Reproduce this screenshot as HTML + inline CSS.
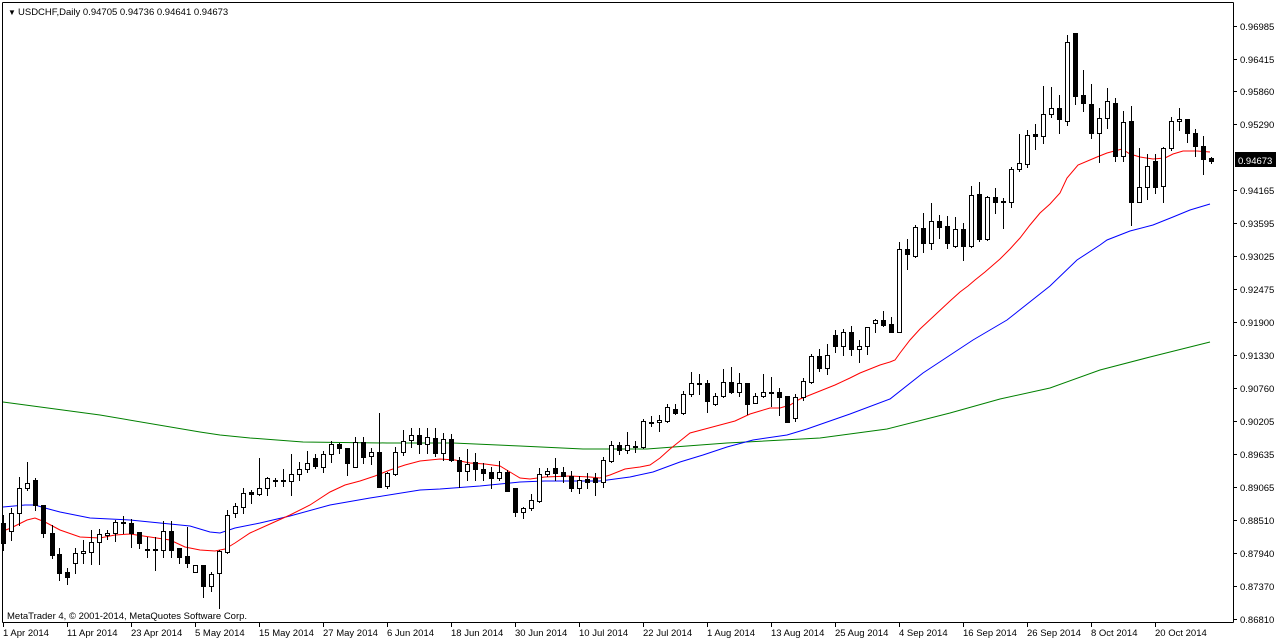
<!DOCTYPE html>
<html><head><meta charset="utf-8"><style>
html,body{margin:0;padding:0;background:#fff;width:1276px;height:641px;overflow:hidden}
svg{display:block}
text{font-family:"Liberation Sans",sans-serif;font-size:9.5px;fill:#000}
</style></head><body>
<svg id="s" width="1276" height="641" xmlns="http://www.w3.org/2000/svg">
<rect x="0" y="0" width="1276" height="641" fill="#fff"/>
<polyline fill="none" stroke="#008000" stroke-width="1" points="3,402 100,415 200,432 220,435 250,438 303,442 387,443 453,443 520,446 583,449 647,449 687,446 727,443 820,438 887,429 950,413 1000,399 1050,388 1100,370 1150,357 1210,342"/>
<polyline fill="none" stroke="#0000ff" stroke-width="1" points="3,507 25,505 35,505 45,508 60,512 90,518 130,520 160,523 190,526 210,532 220,533 235,528 260,523 290,516 330,505 370,498 420,490 440,489 480,486 500,484 520,482 545,481 600,481 630,477 653,472 680,462 703,455 727,447 753,440 787,435 807,429 850,414 890,399 923,373 973,340 1007,320 1050,286 1077,260 1100,245 1107,240 1130,231 1153,225 1173,217 1190,210 1210,204"/>
<polyline fill="none" stroke="#ff0000" stroke-width="1" points="3,531 11,528 27,520 35,518 45,522 60,530 80,537 100,538 115,535 130,534 150,537 170,540 185,547 200,550 215,551 225,549 235,543 250,533 270,524 290,515 310,505 330,492 345,485 360,481 375,476 390,470 405,465 420,461 440,459 455,460 470,463 485,464 500,466 510,472 520,478 530,479 545,477 570,476 590,477 600,478 610,475 625,469 640,467 650,465 660,458 670,449 680,441 690,433 705,429 720,425 735,421 750,414 760,411 770,408 780,408 790,405 800,399 810,395 820,391 835,385 850,378 860,373 870,369 880,365 890,362 895,360 900,353 910,340 920,329 935,315 950,301 960,292 968,286 975,280 985,272 1000,259 1010,249 1020,238 1030,225 1040,213 1050,204 1060,193 1067,178 1078,165 1097,157 1107,153 1122,149 1130,154 1140,157 1153,159 1165,158 1173,154 1183,151 1197,151 1210,152"/>
<g id="bars"></g>
<g fill="none" stroke="#000" stroke-width="1">
<line x1="2.5" y1="2.5" x2="1233.5" y2="2.5"/>
<line x1="2.5" y1="2.5" x2="2.5" y2="622.5"/>
<line x1="1233.5" y1="2.5" x2="1233.5" y2="622.5"/>
<line x1="2.5" y1="622.5" x2="1233.5" y2="622.5"/>
</g>
<g id="ax"></g>
<text x="8" y="15" style="font-size:8px">▼</text>
<text x="18" y="15">USDCHF,Daily  0.94705 0.94736 0.94641 0.94673</text>
<text x="7" y="619">MetaTrader 4, © 2001-2014, MetaQuotes Software Corp.</text>
<rect x="1235" y="152" width="41" height="15" fill="#000"/>
<text x="1238" y="164" style="fill:#fff">0.94673</text>
</svg>
<script>
var NS="http://www.w3.org/2000/svg";
function el(p,t,a,txt){var e=document.createElementNS(NS,t);for(var k in a)e.setAttribute(k,a[k]);if(txt)e.textContent=txt;p.appendChild(e);return e;}
var D="3,523,543,515,550,1|11,513,531,508,540,0|19,488,513,477,525,0|27,483,488,462,490,0|35,480,505,478,510,1|43,505,533,505,537,1|52,533,555,525,558,1|59,554,573,548,580,1|67,572,577,568,584,1|75,553,563,548,573,0|83,551,553,540,563,0|91,542,552,530,564,0|99,534,542,529,564,0|107,533,535,530,539,0|115,522,533,520,541,0|123,522,523,516,533,1|131,523,533,519,547,1|139,532,543,532,548,1|147,549,550,537,557,1|155,549,550,537,570,0|163,531,550,521,557,0|171,531,550,521,557,1|179,548,557,548,563,1|187,556,563,527,567,1|195,565,572,565,572,0|203,565,586,565,597,1|211,574,586,572,591,0|219,551,573,550,608,0|227,515,552,510,553,0|235,506,513,503,517,0|243,493,507,488,513,0|251,492,494,490,503,1|259,488,494,458,495,0|267,478,488,477,495,0|275,480,481,478,486,1|283,480,481,469,486,1|291,474,481,454,495,0|299,469,474,462,480,0|307,463,469,451,472,0|315,458,466,454,468,1|323,454,467,451,472,0|331,444,454,441,462,0|339,444,448,443,453,1|347,448,463,448,475,1|355,442,467,437,467,0|363,442,457,437,463,1|371,452,456,448,464,0|379,452,487,413,487,1|387,473,486,472,488,0|395,452,474,447,475,0|403,441,452,430,455,0|411,435,440,428,447,0|419,435,444,428,453,1|427,437,444,428,453,0|435,438,453,428,456,1|443,439,453,433,460,0|451,439,460,434,461,1|459,460,471,457,487,1|467,464,471,449,480,0|475,462,469,453,480,1|483,469,473,463,480,1|491,472,478,467,488,1|499,472,478,461,480,0|507,472,491,470,491,1|515,488,512,488,516,1|523,508,512,507,518,0|531,500,508,494,510,0|539,474,501,468,502,0|547,471,474,468,476,0|555,468,473,458,480,1|563,472,476,467,482,1|571,476,488,471,491,1|579,480,488,476,493,0|587,479,482,473,488,1|595,478,482,473,495,1|603,460,482,457,487,0|611,445,461,441,462,0|619,445,450,442,454,1|627,445,450,432,453,0|635,446,447,441,452,1|643,421,447,419,448,0|651,422,423,416,426,1|659,420,422,415,431,0|667,407,421,404,422,0|675,409,413,404,414,1|683,394,413,391,414,0|691,383,394,372,396,0|699,383,384,374,394,1|707,383,401,380,412,1|715,396,404,393,405,0|723,382,396,369,397,0|731,382,392,367,393,1|739,383,392,373,396,0|747,383,404,383,414,1|755,396,403,393,403,0|763,392,396,374,397,0|771,392,393,377,406,1|779,392,397,388,415,1|787,396,422,396,422,1|795,397,418,394,421,0|803,381,397,378,400,0|811,356,382,354,383,0|819,356,368,349,371,1|827,355,368,344,374,0|835,335,346,330,352,1|843,332,346,329,355,0|851,332,349,326,355,1|859,346,349,340,362,0|867,327,346,327,354,0|875,320,323,319,332,0|883,320,325,311,326,1|891,324,332,317,332,1|899,249,332,242,332,0|907,249,254,239,269,1|915,227,256,225,257,0|923,228,243,213,252,1|931,221,243,203,249,0|939,221,227,215,238,1|947,226,243,216,248,1|955,229,246,217,247,0|963,229,246,223,260,1|971,195,246,186,247,0|979,194,239,182,241,1|987,197,239,196,240,0|995,197,202,188,213,1|1003,201,202,198,228,1|1011,169,202,167,207,0|1019,163,169,134,171,0|1027,135,164,130,167,0|1035,134,136,124,149,1|1043,114,136,86,143,0|1051,108,114,87,117,0|1059,108,119,95,133,1|1067,42,121,35,125,0|1075,33,96,33,104,1|1083,95,103,70,111,1|1091,104,133,84,138,1|1099,118,133,108,162,0|1107,101,118,88,128,0|1115,103,156,98,161,1|1123,122,156,111,161,0|1131,121,202,106,225,1|1139,187,202,148,202,0|1147,166,187,154,199,0|1155,161,187,154,193,1|1163,148,186,147,202,0|1171,121,148,117,150,0|1179,119,121,108,130,0|1187,119,133,119,142,1|1195,133,146,129,156,1|1203,146,159,136,174,1|1211,158,161,157,163,1";
var g=document.getElementById("bars");
D.split("|").forEach(function(s){var v=s.split(",").map(Number);var x=v[0],t=v[1],b=v[2],wt=v[3],wb=v[4],k=v[5];
el(g,"line",{x1:x+0.5,y1:wt,x2:x+0.5,y2:wb+1,stroke:"#000","stroke-width":1});
if(b-t<1)b=t+1;
el(g,"rect",{x:x-1.5,y:t+0.5,width:4,height:b-t,fill:k?"#000":"#fff",stroke:"#000","stroke-width":1});});
var ax=document.getElementById("ax");
var P=[["0.96985",26],["0.96415",59],["0.95860",91],["0.95290",124],["0.94165",190],["0.93595",223],["0.93025",256],["0.92475",289],["0.91900",322],["0.91330",355],["0.90760",388],["0.90205",421],["0.89635",454],["0.89065",487],["0.88510",520],["0.87940",553],["0.87370",586],["0.86810",619]];
P.forEach(function(p){el(ax,"line",{x1:1233,y1:p[1]+0.5,x2:1237,y2:p[1]+0.5,stroke:"#000"});el(ax,"text",{x:1240,y:p[1]+4},p[0]);});
var L=["1 Apr 2014","11 Apr 2014","23 Apr 2014","5 May 2014","15 May 2014","27 May 2014","6 Jun 2014","18 Jun 2014","30 Jun 2014","10 Jul 2014","22 Jul 2014","1 Aug 2014","13 Aug 2014","25 Aug 2014","4 Sep 2014","16 Sep 2014","26 Sep 2014","8 Oct 2014","20 Oct 2014"];
L.forEach(function(l,i){var x=3+64*i;el(ax,"line",{x1:x+0.5,y1:622,x2:x+0.5,y2:627,stroke:"#000"});el(ax,"text",{x:x,y:636},l);});
</script>
</body></html>
